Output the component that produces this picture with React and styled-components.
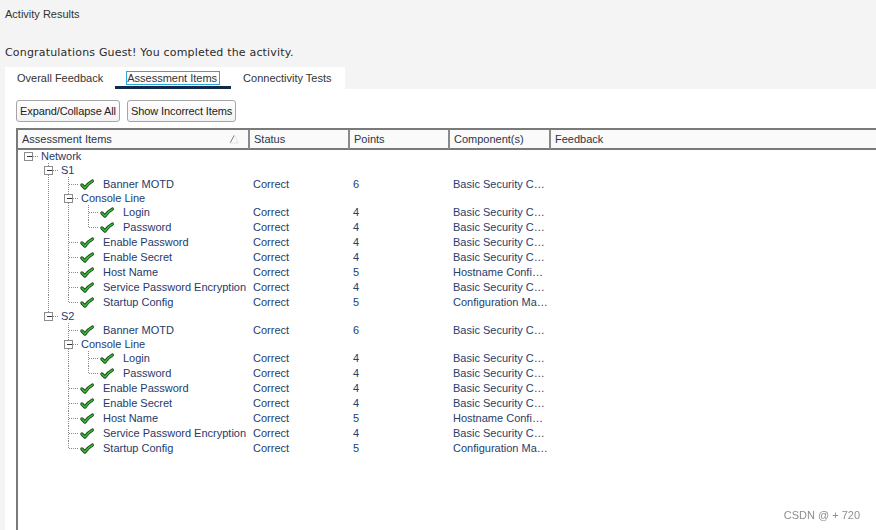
import React from 'react';
import styled, { createGlobalStyle } from 'styled-components';

const GlobalStyle = createGlobalStyle`
  html, body {
    margin: 0;
    padding: 0;
    background: #f4f4f4;
    overflow: hidden;
  }
  body {
    font-family: "Liberation Sans", Arial, sans-serif;
  }
`;

const leaf = (label, points, comp) => ({ label, status: 'Correct', points, comp });

const device = (name) => ({
  label: name,
  children: [
    leaf('Banner MOTD', 6, 'Basic Security Configuration'),
    {
      label: 'Console Line',
      children: [
        leaf('Login', 4, 'Basic Security Configuration'),
        leaf('Password', 4, 'Basic Security Configuration'),
      ],
    },
    leaf('Enable Password', 4, 'Basic Security Configuration'),
    leaf('Enable Secret', 4, 'Basic Security Configuration'),
    leaf('Host Name', 5, 'Hostname Configuration'),
    leaf('Service Password Encryption', 4, 'Basic Security Configuration'),
    leaf('Startup Config', 5, 'Configuration Management'),
  ],
});

const tree = { label: 'Network', children: [device('S1'), device('S2')] };

const rowHeights = [13, 14, 14, 14, 15, 15, 15, 15, 15, 15, 14, 14, 14, 14, 15, 15, 15, 15, 15, 15, 15];

const flatten = (node, depth = 0, lastChain = [true], out = []) => {
  out.push({ ...node, depth, lastChain, group: !!node.children });
  if (node.children) {
    node.children.forEach((child, i) =>
      flatten(child, depth + 1, [...lastChain, i === node.children.length - 1], out)
    );
  }
  return out;
};

const rows = flatten(tree);

const columns = ['Assessment Items', 'Status', 'Points', 'Component(s)', 'Feedback'];

const CHECK = 'M1.4 5 L4.4 8 C6.6 4.8 8.8 2.7 11.8 1.1';

const CheckIcon = ({ x, y }) => (
  <g transform={`translate(${x} ${y})`}>
    <path d={CHECK} stroke="#1d451d" strokeWidth="3.3" fill="none" strokeLinecap="round" strokeLinejoin="round" />
    <path d={CHECK} stroke="#35c035" strokeWidth="1.5" fill="none" strokeLinecap="round" strokeLinejoin="round" />
  </g>
);

const Gutter = ({ row, h }) => {
  const { depth, lastChain, group } = row;
  const cx = (d) => 10 + 20 * d;
  const width = group ? 23 + 20 * depth : 45 + 20 * depth;
  const mid = Math.floor(h / 2) + 0.5;
  const c = cx(depth);
  const dots = { stroke: '#8a8a8a', strokeWidth: 1, strokeDasharray: '1 1' };
  const guides = [];
  for (let k = 1; k < depth; k++) {
    if (!lastChain[k]) {
      guides.push(<line key={k} x1={cx(k) + 0.5} x2={cx(k) + 0.5} y1={0} y2={h} {...dots} />);
    }
  }
  return (
    <GutterSvg width={width} height={h} shapeRendering="crispEdges">
      {guides}
      {depth > 0 && (
        <line x1={c + 0.5} x2={c + 0.5} y1={0} y2={lastChain[depth] ? mid : h} {...dots} />
      )}
      {group ? (
        <>
          <line x1={c + 5} x2={c + 11} y1={mid} y2={mid} {...dots} />
          <rect x={c - 3.5} y={mid - 4} width={8} height={8} fill="#fff" stroke="#8c8c8c" />
          <line x1={c - 1} x2={c + 4} y1={mid} y2={mid} stroke="#333" />
        </>
      ) : (
        <>
          <line x1={c + 1} x2={c + 11} y1={mid} y2={mid} {...dots} />
          <g shapeRendering="geometricPrecision">
            <CheckIcon x={c + 12.5} y={mid - 4.5} />
          </g>
        </>
      )}
    </GutterSvg>
  );
};

const SortIcon = () => (
  <SortSvg width="10" height="10" viewBox="0 0 10 10">
    <path d="M1 9 L5.5 1" stroke="#7d7d7d" strokeWidth="1" fill="none" />
    <path d="M5.5 1 L9 9 L1 9" stroke="#e2e2e2" strokeWidth="1" fill="none" />
  </SortSvg>
);

export default function App() {
  return (
    <>
      <GlobalStyle />
      <Page>
        <Title>Activity Results</Title>
        <Congrats>Congratulations Guest! You completed the activity.</Congrats>
        <TabStrip>
          <Tab>Overall Feedback</Tab>
          <Tab $active>
            <FocusLabel>Assessment Items</FocusLabel>
          </Tab>
          <Tab>Connectivity Tests</Tab>
        </TabStrip>
        <Panel>
          <Toolbar>
            <Button>Expand/Collapse All</Button>
            <Button>Show Incorrect Items</Button>
          </Toolbar>
          <Table>
            <HeaderRow>
              {columns.map((col, i) => (
                <HeaderCell key={col} $first={i === 0}>
                  {col}
                  {i === 0 && <SortIcon />}
                </HeaderCell>
              ))}
            </HeaderRow>
            {rows.map((row, i) => {
              const h = rowHeights[i] || 15;
              return (
                <Row key={i} style={{ height: h }}>
                  <TreeCell>
                    <Gutter row={row} h={h} />
                    <ItemName>{row.label}</ItemName>
                  </TreeCell>
                  <Cell>{row.status}</Cell>
                  <Cell>{row.points}</Cell>
                  <Cell>{row.comp}</Cell>
                  <Cell />
                </Row>
              );
            })}
          </Table>
        </Panel>
        <Watermark>CSDN @ + 720</Watermark>
      </Page>
    </>
  );
}

const Page = styled.div`
  display: flex;
  flex-direction: column;
  height: 100vh;
  padding-left: 5px;
  box-sizing: border-box;
  color: #333;
`;

const Title = styled.div`
  font-size: 11px;
  line-height: 28px;
  color: #333;
`;

const Congrats = styled.div`
  margin: 18px 0 7px;
  font-family: "DejaVu Sans", Verdana, sans-serif;
  font-size: 11px;
  line-height: 14px;
  letter-spacing: 0.18px;
  color: #2b2b2b;
`;

const TabStrip = styled.div`
  display: flex;
  width: 340px;
  height: 22px;
  background: #fff;
`;

const Tab = styled.div`
  position: relative;
  flex: none;
  padding: 0 12px;
  font-size: 11px;
  line-height: 22px;
  color: #333;

  &::after {
    content: '';
    display: ${(p) => (p.$active ? 'block' : 'none')};
    position: absolute;
    left: 0;
    right: 0;
    bottom: 0;
    height: 3px;
    background: #13294b;
  }
`;

const FocusLabel = styled.span`
  display: inline-block;
  line-height: 12px;
  padding-right: 2px;
  outline: 1px solid #2aa8de;
`;

const Panel = styled.div`
  flex: 1;
  min-height: 0;
  overflow: hidden;
  background: #fff;
  padding: 11px 0 0 11px;
`;

const Toolbar = styled.div`
  display: flex;
  gap: 7px;
`;

const Button = styled.button`
  height: 22px;
  padding: 0 3px;
  border: 1px solid #a5a5a5;
  border-radius: 3px;
  background: linear-gradient(#fefefe, #f2f2f2);
  font-family: "Liberation Sans", Arial, sans-serif;
  font-size: 11px;
  letter-spacing: -0.1px;
  color: #222;
`;

const Table = styled.div`
  width: 880px;
  height: 420px;
  margin-top: 6px;
  border: 2px solid #7a7a7a;
  border-right: none;
  background: #fff;
`;

const grid = `
  display: grid;
  grid-template-columns: 230px 100px 100px 101px 1fr;
`;

const HeaderRow = styled.div`
  ${grid}
  height: 18px;
  border-bottom: 2px solid #7a7a7a;
  background: #fafafa;
`;

const HeaderCell = styled.div`
  position: relative;
  border-left: ${(p) => (p.$first ? 'none' : '2px solid #8a8a8a')};
  padding-left: 4px;
  font-size: 11px;
  line-height: 19px;
  color: #2c3548;
  white-space: nowrap;
`;

const SortSvg = styled.svg`
  position: absolute;
  right: 9px;
  top: 4px;
`;

const Row = styled.div`
  ${grid}
  font-size: 11px;
  color: #27406b;
`;

const TreeCell = styled.div`
  display: flex;
  align-items: center;
  white-space: nowrap;
  overflow: hidden;
`;

const GutterSvg = styled.svg`
  flex: none;
  display: block;
`;

const ItemName = styled.span`
  display: block;
  line-height: 13px;
  color: #1f3a6b;
`;

const Cell = styled.div`
  align-self: center;
  min-width: 0;
  padding: 0 1px 0 5px;
  line-height: 13px;
  white-space: nowrap;
  overflow: hidden;
  text-overflow: ellipsis;
`;

const Watermark = styled.div`
  position: fixed;
  right: 16px;
  bottom: 8px;
  font-size: 11px;
  line-height: 13px;
  color: #8e8e8e;
`;
